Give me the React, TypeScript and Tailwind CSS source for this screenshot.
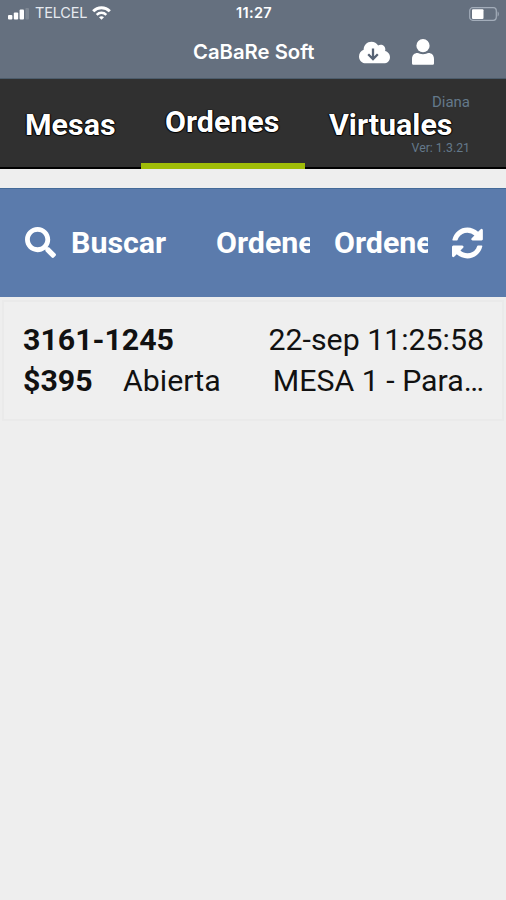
import { FaCloud, FaSearch } from "react-icons/fa";

function SignalBars() {
  return (
    <svg className="block" width="21" height="12" viewBox="0 0 21 12" fill="#fff">
      <rect x="0" y="7" width="4.4" height="4.6" rx="1" />
      <rect x="5.8" y="4.4" width="4.4" height="7.2" rx="1" />
      <rect x="11.600" y="1.600" width="4.400" height="10" rx="1" />
      <rect x="17.400" y="0" width="3.600" height="11.600" rx="1" opacity="0.16" />
    </svg>
  );
}

function Wifi() {
  return (
    <svg className="block" width="19" height="14" viewBox="0 0 19 14" fill="none" stroke="#fff">
      <path d="M1.200 5.200C5.800.7 13.200.7 17.800 5.200" strokeWidth="3" />
      <path d="M4.700 8.800C7.400 6.200 11.600 6.200 14.300 8.800" strokeWidth="2.500" />
      <path d="M9.500 13.800 7 11.200c1.400-1.300 3.600-1.300 5 0z" fill="#fff" stroke="none" />
    </svg>
  );
}

function Battery() {
  return (
    <svg className="block" width="31" height="14" viewBox="0 0 31 14">
      <rect x="0.700" y="0.700" width="26.600" height="12.600" rx="3" fill="none" stroke="#a3adba" strokeWidth="1.200" />
      <rect x="3" y="2.200" width="11.500" height="9.800" rx="1" fill="#fff" />
      <path d="M28.600 4.500v5c1.600-.6 1.600-4.400 0-5z" fill="#a3adba" />
    </svg>
  );
}

function CloudDownload() {
  return (
    <span className="relative block h-[31px] w-[31px]">
      <FaCloud className="h-[31px] w-[31px]" />
      <svg className="absolute top-[11px] left-[8px]" width="12" height="13" viewBox="0 0 12 13" fill="none" stroke="#566274" strokeWidth="2.300">
        <path d="M6 0.500V10M1.200 6.200 6 11l4.800-4.800" />
      </svg>
    </span>
  );
}

function Person() {
  return (
    <svg className="ml-[21.500px] block" width="22" height="26" viewBox="0 0 22 26" fill="#fff">
      <circle cx="11" cy="6.700" r="6.600" />
      <path d="M0 20c0-4 2.400-6 5.500-6 1.500 0 3 1.300 5.500 1.300S15 14 16.500 14c3.100 0 5.500 2 5.500 6v4.200c0 1-.7 1.600-1.600 1.600H1.600C.7 25.800 0 25.200 0 24.200z" />
    </svg>
  );
}

function Refresh() {
  return (
    <svg className="ml-[24px] block shrink-0" width="36" height="36" viewBox="128 0 1792 1792" fill="#fff">
      <path d="M1639 1056q0 5-1 7-64 268-268 434.500T892 1664q-146 0-282.500-55T366 1452l-129 129q-19 19-45 19t-45-19-19-45v-448q0-26 19-45t45-19h448q26 0 45 19t19 45-19 45l-137 137q71 66 161 102t187 36q134 0 250-65t186-179q11-17 53-117 8-23 30-23h192q13 0 22.500 9.500t9.500 22.500zm25-800v448q0 26-19 45t-45 19h-448q-26 0-45-19t-19-45 19-45l138-138Q1097 384 896 384q-134 0-250 65T460 628q-11 17-53 117-8 23-30 23H178q-13 0-22.500-9.500T146 736v-7q65-268 270-434.500T896 128q146 0 284 55.500T1425 340l130-129q19-19 45-19t45 19 19 45z" />
    </svg>
  );
}

function StatusBar() {
  return (
    <div className="grid h-[27px] grid-cols-3 items-center pr-[6px] pl-2 text-[14.5px] leading-none text-[#e6eaf0]">
      <div className="flex items-center">
        <SignalBars />
        <span className="ml-[6px] tracking-[-0.2px]">TELCEL</span>
        <span className="-mt-[2px] ml-[5px]"><Wifi /></span>
      </div>
      <span className="text-center text-[14.5px] font-semibold tracking-[0.3px] text-white">11:27</span>
      <span className="justify-self-end"><Battery /></span>
    </div>
  );
}

export default function App() {
  return (
    <div className="h-[900px] w-[506px] overflow-hidden bg-[#eeeeee] font-['Roboto',sans-serif]">
      <header className="h-[79px] border-b border-[#4c5c6b] bg-[#65707f] font-['Inter',sans-serif]">
        <StatusBar />
        <div className="flex h-[50px] items-center pl-[193px] text-white">
          <h1 className="w-[166px] text-[20.300px] leading-none font-semibold whitespace-nowrap">CaBaRe Soft</h1>
          <CloudDownload />
          <Person />
        </div>
      </header>

      <nav className="relative flex h-[90px] bg-[#303030] text-[30.400px] leading-[30px] font-bold text-white [text-shadow:0_1px_1px_#000,1px_0_1px_#000,-1px_0_1px_#000]">
        <div className="w-[141px] border-b-2 border-black pt-[31px] pl-[25px]">Mesas</div>
        <div className="w-[164px] border-b-[6px] border-[#a0bd08] pt-[28px] pl-[24px]">Ordenes</div>
        <div className="flex-1 border-b-2 border-black pt-[31px] pl-[24px]">Virtuales</div>
        <span className="absolute top-[15px] right-[36px] text-[15px] leading-[17px] font-normal text-[#64798b] [text-shadow:none]">Diana</span>
        <span className="absolute top-[62px] right-[36px] text-[12.300px] leading-[14px] font-normal text-[#64798b] [text-shadow:none]">Ver: 1.3.21</span>
      </nav>

      <div className="mt-[19px] flex h-[109px] items-center border-t border-[#436a98] bg-[#5b7bac] pl-[25px] text-[30.400px] leading-[36px] font-bold text-white">
        <FaSearch className="-mt-[2px] h-[31px] w-[31px]" />
        <span className="ml-[15px] w-[145px]">Buscar</span>
        <span className="w-[94px] overflow-hidden">Ordenes</span>
        <span className="ml-[24px] w-[94px] overflow-hidden">Ordenes</span>
        <Refresh />
      </div>

      <main className="mx-[2px] mt-[3px] h-[121px] border-2 border-[#eaeaea] bg-[#efefef] pt-[17px] pr-[18px] pl-[19px] text-[30.300px] leading-[41px] text-[#111]">
        <div className="flex justify-between">
          <strong className="font-bold">3161-1245</strong>
          <span>22-sep 11:25:58</span>
        </div>
        <div className="flex">
          <strong className="w-[100px] font-bold">$395</strong>
          <span>Abierta</span>
          <span className="ml-auto text-right whitespace-nowrap">MESA 1 - Para…</span>
        </div>
      </main>
    </div>
  );
}
